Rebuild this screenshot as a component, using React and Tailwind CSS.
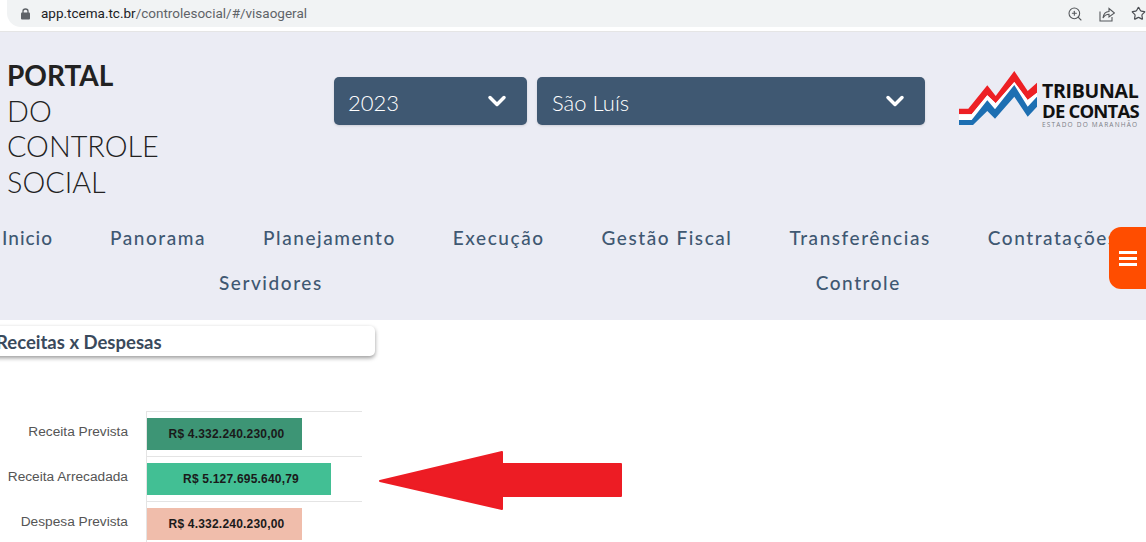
import React from "react";
import { ZoomIn, Star, ChevronDown } from "lucide-react";

const topNav = ["Panorama", "Planejamento", "Execução", "Gestão Fiscal", "Transferências", "Contratações"];

const bars = [
  { label: "Receita Prevista", value: "R$ 4.332.240.230,00", width: "w-[155px]", color: "bg-[#3d9575]" },
  { label: "Receita Arrecadada", value: "R$ 5.127.695.640,79", width: "w-[184px]", color: "bg-[#42bf94]" },
  { label: "Despesa Prevista", value: "R$ 4.332.240.230,00", width: "w-[155px]", color: "bg-[#f0bdab]" },
];

function ShareIcon() {
  return (
    <svg width="16" height="16" viewBox="0 0 16 16" fill="none" stroke="#55585c" strokeWidth="1.1" className="shrink-0">
      <path d="M1 5.5V15H13V11" />
      <path d="M4 12C4.5 8 7 5.5 10 5.5V2.5L15.5 7L10 11V8.3C7.5 8.3 5.5 9.5 4 12Z" />
    </svg>
  );
}

function LockIcon() {
  return (
    <svg width="9" height="12" viewBox="0 0 9 12" className="shrink-0">
      <path d="M2 5V3.2C2 1.8 3 1 4.5 1S7 1.8 7 3.2V5" fill="none" stroke="#5f6368" strokeWidth="1.3" />
      <rect x="0" y="4.5" width="9" height="7" rx="1" fill="#5f6368" />
    </svg>
  );
}

function Logo() {
  return (
    <div className="flex items-start shrink-0">
      <svg width="78" height="54" viewBox="0 0 78 54" className="shrink-0">
        <path d="M0 37.7H9.3L28.3 14.3L36.7 25L55.3 0L68.7 20L78 11.7V21.7L68.7 29L55.3 11L36.7 32.3L28.3 24.3L12.7 43.3H0Z" fill="#ed2024" />
        <path d="M0 43.3H12.7L28.3 24.3L36.7 32.3L55.3 11L68.7 29L78 21.7V25.7L68.7 35.7L55.3 14L36 38.3L28.3 29.3L12.7 49H0Z" fill="#ffffff" />
        <path d="M0 49H12.7L28.3 29.3L36 38.3L55.3 14L68.7 35.7L78 25.7V35.7L68.7 45.7L55.3 25.7L36 47.7L28.3 40L14 54H0Z" fill="#1d6fb2" />
      </svg>
      <div className="ml-[5px] mt-[8px] font-['Open_Sans',sans-serif] text-[#111111]">
        <div className="text-[19.5px] leading-[23px] font-bold tracking-[-0.3px] whitespace-nowrap">TRIBUNAL</div>
        <div className="text-[18.5px] leading-[18px] font-bold tracking-[-0.8px] whitespace-nowrap">DE CONTAS</div>
        <div className="text-[6.5px] leading-[9px] tracking-[1.2px] text-[#7b7f86] whitespace-nowrap">ESTADO DO MARANHÃO</div>
      </div>
    </div>
  );
}

function Select({ value, className }) {
  return (
    <div className={`h-12 rounded-[5px] bg-[#3f5872] flex items-center justify-between text-white text-[22px] font-light shadow-sm ${className}`}>
      <span className="pt-[2px]">{value}</span>
      <ChevronDown size={28} strokeWidth={3} />
    </div>
  );
}

export default function App() {
  return (
    <div className="relative w-[1146px] h-[542px] overflow-hidden bg-white font-['Lato',sans-serif]">
      {/* browser address bar */}
      <div className="h-8 bg-white border-b border-[#e5e5e5] pb-1">
        <div className="h-[27px] ml-[7px] rounded-bl-[14px] bg-[#f1f3f4] flex items-center pl-[14px] font-['Roboto',sans-serif] text-[13.5px]">
          <LockIcon />
          <span className="ml-[11px] text-[#202124]">app.tcema.tc.br</span>
          <span className="text-[#5f6368]">/controlesocial/#/visaogeral</span>
          <div className="ml-auto flex items-center gap-4">
            <ZoomIn size={16} stroke="#55585c" strokeWidth={1.6} />
            <ShareIcon />
            <Star size={15} stroke="#4a4d52" strokeWidth={1.9} />
          </div>
        </div>
      </div>

      {/* header */}
      <header className="h-[288px] bg-[#ebecf4] overflow-hidden">
        <div className="flex items-start h-[180px]">
          <h1 className="w-[334px] pl-[7px] pt-[26px] text-[28.8px] leading-[35.6px] text-[#222222] font-light shrink-0">
            <div className="font-bold text-[28px]">PORTAL</div>
            <div>DO</div>
            <div>CONTROLE</div>
            <div>SOCIAL</div>
          </h1>
          <div className="flex items-start gap-[10px] pt-[45px] shrink-0">
            <Select value="2023" className="w-[193px] pl-[14px] pr-4" />
            <Select value="São Luís" className="w-[388px] pl-[15px] pr-4" />
          </div>
          <div className="pt-[39px] pl-[34px]">
            <Logo />
          </div>
        </div>
        <nav className="text-[#3f5872] text-[19px] font-medium tracking-[1.55px] leading-[24px]">
          <div className="flex whitespace-nowrap pl-[2px] pt-[14px] gap-[57px]">
            <span className="tracking-[1px]">Inicio</span>
            {topNav.map((item) => (
              <span key={item}>{item}</span>
            ))}
          </div>
          <div className="flex whitespace-nowrap pl-[219px] pt-[21px] gap-[493px]">
            <span>Servidores</span>
            <span>Controle</span>
          </div>
        </nav>
      </header>

      {/* floating menu button */}
      <button className="absolute left-[1109px] top-[227px] w-[37px] h-[62px] bg-[#ff4d00] rounded-l-[12px] flex flex-col items-center justify-center gap-[3px]">
        <span className="block w-[18px] h-[3px] bg-white" />
        <span className="block w-[18px] h-[3px] bg-white" />
        <span className="block w-[18px] h-[3px] bg-white" />
      </button>

      {/* card title */}
      <div className="mt-[6px] ml-[-10px] w-[385px] h-[30px] bg-white rounded-[5px] shadow-[0_2px_4px_rgba(0,0,0,0.4)] flex items-center pl-[6px]">
        <h2 className="text-[18.5px] pt-1 font-bold text-[#3a4a5c] whitespace-nowrap">Receitas x Despesas</h2>
      </div>

      {/* chart */}
      <div className="mt-[55px] font-['Liberation_Sans',sans-serif]">
        {bars.map((bar) => (
          <div key={bar.label} className="flex h-[45px]">
            <div className="w-[128px] pt-[13px] text-right text-[13.7px] leading-[16px] text-[#555555] whitespace-nowrap">{bar.label}</div>
            <div className="ml-[18px] w-[216px] border-l border-t border-[#e4e4e4] pt-[6px]">
              <div className={`h-[32px] ${bar.width} ${bar.color} flex items-center justify-center pl-1 text-[12px] tracking-[0.2px] font-bold text-[#1a1a1a]`}>
                {bar.value}
              </div>
            </div>
          </div>
        ))}
      </div>

      {/* annotation arrow */}
      <svg className="absolute left-[375px] top-[447px]" width="252" height="68" viewBox="0 0 252 68">
        <path d="M5 34L127 5V17H246V49H127V62Z" fill="#ed1c24" stroke="#ed1c24" strokeWidth="2" strokeLinejoin="round" />
      </svg>
    </div>
  );
}
